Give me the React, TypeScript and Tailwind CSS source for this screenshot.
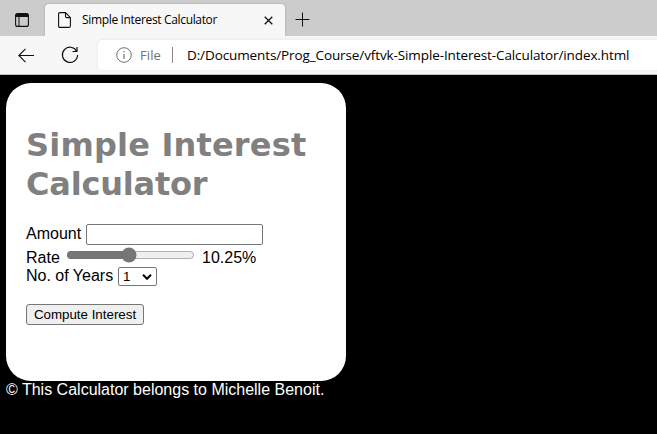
import { useState } from "react";

function TabStrip() {
  return (
    <div className="flex h-9 items-end bg-[#cccccc]">
      <div className="flex h-9 w-[45px] items-center pl-[15px] pt-[3px]">
        <svg width="14" height="14" viewBox="0 0 14 14" fill="none">
          <rect x="0.6" y="0.6" width="12.8" height="12.8" rx="2" stroke="#111" strokeWidth="1.1" />
          <path d="M.5 4V2.3Q.5.5 2.3.5h9.4q1.8 0 1.8 1.8V4z" fill="#111" />
          <path d="M4 4v9" stroke="#111" />
        </svg>
      </div>
      <div className="flex h-8 w-60 items-center rounded-t-[4px] bg-[#f7f7f7] pl-[13px] shadow-[0_0_2px_rgba(0,0,0,0.25)]">
        <svg width="13" height="16" viewBox="0 0 13 16" fill="none" stroke="#111" strokeWidth="1.1">
          <path d="M2 .6h5.5l4.9 5v8.3q0 1.5-1.5 1.5H2Q.6 15.400.6 14V2Q.6.6 2 .6z" />
          <path d="M7.500.6v3.600q0 1.400 1.400 1.400h3.500" />
        </svg>
        <span className="ml-[11px] w-[136px] whitespace-nowrap font-['Open_Sans',sans-serif] text-[12px] leading-4 tracking-[-0.34px] text-black">
          Simple Interest Calculator
        </span>
        <svg className="ml-[46px] mt-px" width="9" height="9" viewBox="0 0 9 9" stroke="#111" strokeWidth="1.3">
          <path d="M.7.7l7.600 7.600M8.300.7L.7 8.300" />
        </svg>
      </div>
      <svg className="mb-[9px] ml-[10px]" width="15" height="15" viewBox="0 0 15 15" stroke="#111">
        <path d="M7.500.5v14M.5 7.500h14" />
      </svg>
    </div>
  );
}

function Toolbar() {
  return (
    <div className="relative flex h-[39px] items-center border-b border-[#bdbdbd] bg-[#f7f7f7]">
      <svg className="ml-[18px]" width="17" height="15" viewBox="0 0 17 15" fill="none" stroke="#111" strokeWidth="1.1">
        <path d="M16 7.500H.8M7.500.8L.8 7.500l6.700 6.700" />
      </svg>
      <svg className="ml-[26px]" width="18" height="18" viewBox="0 0 18 18" fill="none" stroke="#111" strokeWidth="1.2">
        <path d="M15.700 5.200A7.600 7.600 0 1 0 16.600 9" />
        <path d="M16 1v4.500h-4.500" />
      </svg>
      <div className="ml-[19px] flex h-[30px] grow items-center rounded-l-[4px] bg-white pl-[18px] shadow-[0_0_3px_rgba(0,0,0,0.1)]">
        <svg width="16" height="16" viewBox="0 0 16 16" fill="none" stroke="#707070">
          <circle cx="8" cy="8" r="7.300" />
          <path d="M8 7v5M8 4v1.300" strokeWidth="1.200" />
        </svg>
        <span className="ml-2 w-[22px] font-['Open_Sans',sans-serif] text-[13px] leading-5 tracking-[0.1px] text-[#707070]">File</span>
        <span className="ml-[10px] h-4 w-px bg-[#888]" />
        <span className="ml-[14px] whitespace-nowrap font-['Open_Sans',sans-serif] text-[13.5px] leading-5 tracking-[-0.11px] text-black">
          D:/Documents/Prog_Course/vftvk-Simple-Interest-Calculator/index.html
        </span>
      </div>
    </div>
  );
}

export default function App() {
  const [rate, setRate] = useState(10.25);
  return (
    <div className="h-[434px] w-[657px] overflow-hidden bg-black font-['Liberation_Sans',Arial,sans-serif] text-[16px] leading-[18px]">
      <TabStrip />
      <Toolbar />
      <main className="ml-[6px] mt-2 h-[298px] w-[340px] rounded-[25px] bg-white px-5 pt-[43px] text-black">
        <h1 className="font-['DejaVu_Sans',Verdana,sans-serif] text-[32px] font-bold leading-[39px] text-[#808080]">
          <span className="block whitespace-nowrap tracking-[0.19px]">Simple Interest</span>
          <span className="block whitespace-nowrap tracking-[-0.2px]">Calculator</span>
        </h1>
        <div className="mt-5 flex h-6 items-start">
          <label htmlFor="amount" className="w-[60px] pt-px">Amount</label>
          <input
            id="amount"
            className="h-[21px] w-[177px] rounded-[2px] border border-[#767676] bg-white px-0.5 text-[13.333px] outline-none"
          />
        </div>
        <div className="flex h-[19px] items-start">
          <label htmlFor="rate" className="w-10 pt-px">Rate</label>
          <input
            id="rate"
            type="range"
            min="1"
            max="20"
            step="0.25"
            value={rate}
            onChange={(e) => setRate(Number(e.target.value))}
            className="-mt-px h-4 w-[129px] accent-[#767676]"
          />
          <span className="ml-[7px] pt-px">{rate}%</span>
        </div>
        <div className="flex h-[37px] items-start">
          <label htmlFor="years" className="w-[92px] whitespace-nowrap">No. of Years</label>
          <div className="grid">
            <select
              id="years"
              className="col-start-1 row-start-1 h-[19px] w-[39px] appearance-none rounded-[2px] border border-[#767676] bg-white pl-1 text-[13.333px] leading-4 outline-none"
            >
              {Array.from({ length: 10 }, (_, i) => (
                <option key={i}>{i + 1}</option>
              ))}
            </select>
            <svg
              className="pointer-events-none col-start-1 row-start-1 mr-[5px] self-center justify-self-end"
              width="10"
              height="6"
              viewBox="0 0 10 6"
              fill="none"
              stroke="black"
              strokeWidth="2"
            >
              <path d="M1 .8l4 4 4-4" />
            </svg>
          </div>
        </div>
        <button className="block h-[21px] w-[118px] whitespace-nowrap rounded-[3px] border border-[#767676] bg-[#efefef] text-center text-[13.333px] leading-[19px]">
          Compute Interest
        </button>
      </main>
      <footer className="ml-[6px] text-white">© This Calculator belongs to Michelle Benoit.</footer>
    </div>
  );
}
